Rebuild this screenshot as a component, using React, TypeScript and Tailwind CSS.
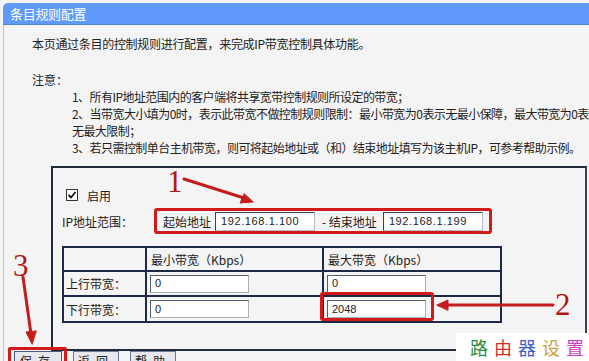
import React from "react";

const cjk = { fontFamily: '"Noto Sans CJK SC", "Liberation Sans", sans-serif' };

function TextInput({ value, w }: { value: string; w: string }) {
  return (
    <div
      className={`${w} h-[19px] bg-white border border-[#3a4150] border-r-[#b8bcc4] border-b-[#b8bcc4] flex items-center pl-[5px] text-[11px] tracking-[0.6px] text-[#222]`}
      style={{ fontFamily: '"Liberation Sans", sans-serif' }}
    >
      {value}
    </div>
  );
}

function SmallInput({ value }: { value: string }) {
  return (
    <div
      className="w-[99px] h-[18px] bg-white border border-[#55606e] border-r-[#aab0ba] border-b-[#aab0ba] flex items-center pl-[4px] text-[11px] text-[#222]"
      style={{ fontFamily: '"Liberation Sans", sans-serif' }}
    >
      {value}
    </div>
  );
}

export default function App() {
  return (
    <div
      className="relative w-[589px] h-[361px] overflow-hidden bg-[#f4f4f4] text-[12px] text-[#222]"
      style={cjk}
    >
      <div className="pt-[3px] pl-[3px] w-[700px]">
        {/* title bar */}
        <div className="h-[22px] bg-[#609bfb] border-b border-[#5282cc] rounded-tl-[5px] flex items-center pl-[7px] text-white text-[13px] leading-none tracking-[-0.3px]">
          条目规则配置
        </div>
        {/* body */}
        <div className="border-l border-[#d8c49a] pl-[28px] pt-[10px] leading-[17px] whitespace-nowrap">
          <div className="tracking-[-0.3px]">本页通过条目的控制规则进行配置，来完成IP带宽控制具体功能。</div>
          <div className="mt-[19px]">注意：</div>
          <div className="pl-[40px] tracking-[-0.55px]">
            <div>1、所有IP地址范围内的客户端将共享宽带控制规则所设定的带宽；</div>
            <div>2、当带宽大小填为0时，表示此带宽不做控制规则限制：最小带宽为0表示无最小保障，最大带宽为0表示</div>
            <div>无最大限制；</div>
            <div>3、若只需控制单台主机带宽，则可将起始地址或（和）结束地址填写为该主机IP，可参考帮助示例。</div>
          </div>

          {/* main box */}
          <div className="mt-[10px] ml-[19px] w-[536px] h-[185px] border-2 border-[#222b3a] border-r-[#3a4252] pl-[9px] pt-[20px]">
            <div className="flex items-center h-[14px] pl-[4px]">
              <div className="w-[12px] h-[12px] bg-white border border-[#333] flex items-center justify-center">
                <svg width="10" height="10" viewBox="0 0 10 10">
                  <path d="M1.5 5 L4 7.5 L8.5 2" stroke="#111" strokeWidth="1.8" fill="none" />
                </svg>
              </div>
              <span className="ml-[9px]">启用</span>
            </div>
            <div className="flex items-center mt-[6px]">
              <span className="w-[92px]">IP地址范围：</span>
              <div className="flex items-center h-[26px] border-[3px] border-[#d21a1a] rounded-[3px] pl-[6px] pr-[6px]">
                <span className="mr-[4px]">起始地址</span>
                <TextInput value="192.168.1.100" w="w-[100px]" />
                <span className="ml-[7px] mr-[6px]">- 结束地址</span>
                <TextInput value="192.168.1.199" w="w-[100px]" />
              </div>
            </div>
            {/* table */}
            <div className="mt-[12px] w-[440px] border-2 border-[#1c2a48] grid grid-cols-[83px_177px_1fr]">
              <div className="h-[24px] border-r-2 border-b-2 border-[#1c2a48]"></div>
              <div className="h-[24px] border-r-2 border-b-2 border-[#1c2a48] pl-[4px] flex items-center">
                最小带宽（Kbps）
              </div>
              <div className="h-[24px] border-b-2 border-[#1c2a48] pl-[4px] flex items-center">
                最大带宽（Kbps）
              </div>
              <div className="h-[25px] border-r-2 border-b-2 border-[#1c2a48] pl-[2px] flex items-center">
                上行带宽：
              </div>
              <div className="h-[25px] border-r-2 border-b-2 border-[#1c2a48] pl-[3px] flex items-center">
                <SmallInput value="0" />
              </div>
              <div className="h-[25px] border-b-2 border-[#1c2a48] pl-[3px] flex items-center">
                <SmallInput value="0" />
              </div>
              <div className="h-[24px] border-r-2 border-[#1c2a48] pl-[2px] flex items-center">
                下行带宽：
              </div>
              <div className="h-[24px] border-r-2 border-[#1c2a48] pl-[3px] flex items-center">
                <SmallInput value="0" />
              </div>
              <div className="h-[24px] pl-[3px] flex items-center">
                <SmallInput value="2048" />
              </div>
            </div>
          </div>

          {/* buttons */}
          <div className="flex gap-[11px] mt-[0px] ml-[-18px]">
            <div className="w-[48px] h-[18px] bg-[#e6e8ee] border border-[#4a5a78] flex items-center justify-center tracking-[6px]">保存</div>
            <div className="w-[46px] h-[18px] bg-[#e6e8ee] border border-[#6a7a98] flex items-center justify-center tracking-[6px]">返回</div>
            <div className="w-[46px] h-[18px] bg-[#e6e8ee] border border-[#6a7a98] flex items-center justify-center tracking-[6px]">帮助</div>
          </div>
        </div>
      </div>

      {/* red annotation boxes */}
      <div className="absolute left-[320px] top-[292px] w-[114px] h-[29px] border-[3px] border-[#d21a1a] rounded-[3px]"></div>
      <div className="absolute left-[8px] top-[347px] w-[59px] h-[20px] border-[3px] border-[#d21a1a] rounded-[2px]"></div>

      {/* arrows */}
      <svg className="absolute left-0 top-0" width="589" height="361" viewBox="0 0 589 361">
        <g stroke="#c41c1c" strokeWidth="3" fill="#c41c1c" strokeLinecap="round">
          <line x1="184" y1="179" x2="244" y2="198" />
          <path d="M253 202 L240 203 L244 194 Z" strokeWidth="1" />
          <line x1="553" y1="305" x2="446" y2="305" />
          <path d="M437 305 L448 300 L448 310 Z" strokeWidth="1" />
          <line x1="23" y1="277" x2="31" y2="334" />
          <path d="M32 344 L26 332 L36 331 Z" strokeWidth="1" />
        </g>
      </svg>
      <div className="absolute left-[167px] top-[166px] text-[31px] leading-none text-[#b01818]" style={{ fontFamily: '"Liberation Serif", serif' }}>1</div>
      <div className="absolute left-[555px] top-[289px] text-[31px] leading-none text-[#b01818]" style={{ fontFamily: '"Liberation Serif", serif' }}>2</div>
      <div className="absolute left-[13px] top-[250px] text-[31px] leading-none text-[#b01818]" style={{ fontFamily: '"Liberation Serif", serif' }}>3</div>

      {/* watermark */}
      <div className="absolute left-[456px] top-[333px] w-[133px] h-[28px] bg-white flex items-center justify-end pr-[5px] gap-[6px] text-[18px] leading-none" style={{ fontFamily: '"Noto Sans CJK SC", serif' }}>
        <span className="text-[#2f8a3a]">路</span>
        <span className="text-[#d42a2a]">由</span>
        <span className="text-[#3a5ec8]">器</span>
        <span className="text-[#c8a040]">设</span>
        <span className="text-[#d040c8]">置</span>
      </div>
    </div>
  );
}
